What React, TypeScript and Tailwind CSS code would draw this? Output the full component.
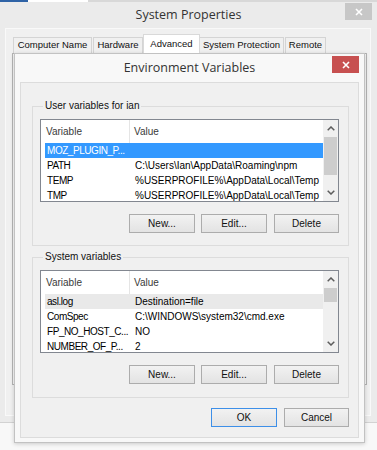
import React from 'react';

type Row = { name: string; value: string; sel?: 'focus' | 'blur' };

const userRows: Row[] = [
  { name: 'MOZ_PLUGIN_P...', value: '', sel: 'focus' },
  { name: 'PATH', value: 'C:\\Users\\Ian\\AppData\\Roaming\\npm' },
  { name: 'TEMP', value: '%USERPROFILE%\\AppData\\Local\\Temp' },
  { name: 'TMP', value: '%USERPROFILE%\\AppData\\Local\\Temp' },
];

const systemRows: Row[] = [
  { name: 'asl.log', value: 'Destination=file', sel: 'blur' },
  { name: 'ComSpec', value: 'C:\\WINDOWS\\system32\\cmd.exe' },
  { name: 'FP_NO_HOST_C...', value: 'NO' },
  { name: 'NUMBER_OF_P...', value: '2' },
];

const Chevron = ({ up }: { up?: boolean }) => (
  <svg width="8" height="5" viewBox="0 0 8 5">
    <path
      d={up ? 'M0.7 4.3 L4 1 L7.3 4.3' : 'M0.7 0.7 L4 4 L7.3 0.7'}
      fill="none"
      stroke="#5d5d5d"
      strokeWidth="1.5"
    />
  </svg>
);

const CloseX = () => (
  <svg width="8" height="8" viewBox="0 0 8 8">
    <path d="M1 1 L7 7 M7 1 L1 7" stroke="#ffffff" strokeWidth="1.6" />
  </svg>
);

const Button = ({ label, w, primary }: { label: string; w: string; primary?: boolean }) => (
  <div
    className={`${w} h-[19px] flex items-center justify-center border bg-gradient-to-b from-[#f2f2f2] to-[#e3e3e3] text-[10px] text-[#111] ${
      primary ? 'border-[#3d8fe8]' : 'border-[#acacac]'
    }`}
  >
    {label}
  </div>
);

const VarList = ({ rows, thumb }: { rows: Row[]; thumb: string }) => (
  <div className="flex h-[83px] w-[299px] border border-[#828790] bg-white">
    <div className="flex-1 overflow-hidden">
      <div className="flex h-[23px] items-center text-[10px] text-[#3a3a3a]">
        <div className="w-[89px] h-full flex items-center pl-[5px] border-r border-[#e5e5e5]">Variable</div>
        <div className="pl-[4px]">Value</div>
      </div>
      {rows.map((r) => (
        <div
          key={r.name}
          className={`ml-[4px] flex h-[15px] items-center text-[10px] whitespace-nowrap ${
            r.sel === 'focus'
              ? 'bg-[#3399ff] text-white'
              : r.sel === 'blur'
              ? 'bg-[#e9e9e9] text-black'
              : 'text-black'
          }`}
        >
          <div className="w-[86px] pl-[2px] tracking-[-0.45px]">{r.name}</div>
          <div className="pl-[4px]">{r.value}</div>
        </div>
      ))}
    </div>
    <div className="flex w-[15px] flex-col bg-[#f0f0f0]">
      <div className="flex h-[17px] items-center justify-center">
        <Chevron up />
      </div>
      <div className="flex-1">
        <div className={`mx-[1px] ${thumb} bg-[#cdcdcd]`} />
      </div>
      <div className="flex h-[17px] items-center justify-center">
        <Chevron />
      </div>
    </div>
  </div>
);

const Group = ({ title, rows, thumb, h, mt }: { title: string; rows: Row[]; thumb: string; h: string; mt: string }) => (
  <fieldset className={`${mt} ${h} ml-[11px] w-[317px] border border-[#dcdcdc] pl-[7px]`}>
    <legend className="ml-[3px] h-[14px] px-[2px] text-[10px] leading-[14px] text-[#111]">{title}</legend>
    <div className="mt-[6px]">
      <VarList rows={rows} thumb={thumb} />
    </div>
    <div className="mt-[12px] flex w-[299px] justify-end">
      <Button label="New..." w="w-[66px] mr-[6px]" />
      <Button label="Edit..." w="w-[66px] mr-[7px]" />
      <Button label="Delete" w="w-[65px]" />
    </div>
  </fieldset>
);

const tabs = [
  { label: 'Computer Name', w: 'w-[79px]' },
  { label: 'Hardware', w: 'w-[50px]' },
  { label: 'Advanced', w: 'w-[57px]', active: true },
  { label: 'System Protection', w: 'w-[85px]' },
  { label: 'Remote', w: 'w-[41px]' },
];

export default function App() {
  return (
    <div className="relative h-[450px] w-[377px] overflow-hidden bg-[#f8f8f8] font-['Liberation_Sans',Arial,sans-serif]">
      {/* edge of window behind */}
      <div className="flex h-[2px]">
        <div className="w-[28px] bg-[#2f63a6]" />
        <div className="w-[60px] bg-white" />
        <div className="flex-1 bg-[#d8d8d8]" />
      </div>

      {/* System Properties */}
      <div className="flex h-[421px] flex-col border-b border-[#d2d2d2] bg-[#ebebeb]">
        <div className="relative flex h-[26px] items-center justify-center font-['Open_Sans',sans-serif] text-[12.5px] text-[#333]">
          System Properties
          <div className="absolute right-[5px] top-[1px] flex h-[17px] w-[27px] items-center justify-center bg-[#c7c7c7]">
            <CloseX />
          </div>
        </div>
        <div className="mb-[6px] ml-[5px] mr-[6px] flex flex-1 flex-col border border-[#f9f9f9] bg-[#f0f0f0]">
          <div className="ml-[7px] mt-[5px] flex h-[19px] items-end">
            {tabs.map((t) => (
              <div
                key={t.label}
                className={`${t.w} flex items-center justify-center border border-b-0 text-[9.5px] text-[#111] ${
                  t.active
                    ? 'h-[19px] -mx-[1px] z-10 bg-white border-[#d9d9d9]'
                    : 'h-[16px] mr-[1px] bg-[#f0f0f0] border-[#d4d4d4]'
                }`}
              >
                {t.label}
              </div>
            ))}
          </div>
          <div className="ml-[6px] mr-[3px] h-[332px] border border-[#b4b4b4] bg-[#f7f7f7]" />
        </div>
      </div>

      {/* Environment Variables */}
      <div className="absolute left-[14px] top-[53px] flex h-[390px] w-[351px] flex-col border border-[#c2c2c2] bg-[#f8f8f8] shadow-[0_1px_4px_rgba(0,0,0,0.18)]">
        <div className="relative flex h-[28px] items-center justify-center font-['Open_Sans',sans-serif] text-[12.5px] text-[#333]">
          Environment Variables
          <div className="absolute right-[5px] top-[2px] flex h-[17px] w-[27px] items-center justify-center bg-[#c75050]">
            <CloseX />
          </div>
        </div>
        <div className="mx-[5px] mb-[4px] flex flex-1 flex-col border border-[#dcdcdc] bg-[#f0f0f0]">
          <Group title="User variables for ian" rows={userRows} thumb="h-[38px]" h="h-[147px]" mt="mt-[16px]" />
          <Group title="System variables" rows={systemRows} thumb="h-[14px]" h="h-[148px]" mt="mt-[4px]" />
          <div className="mr-[9px] mt-[10px] flex justify-end">
            <Button label="OK" w="w-[66px] mr-[7px]" primary />
            <Button label="Cancel" w="w-[65px]" />
          </div>
        </div>
      </div>
    </div>
  );
}
